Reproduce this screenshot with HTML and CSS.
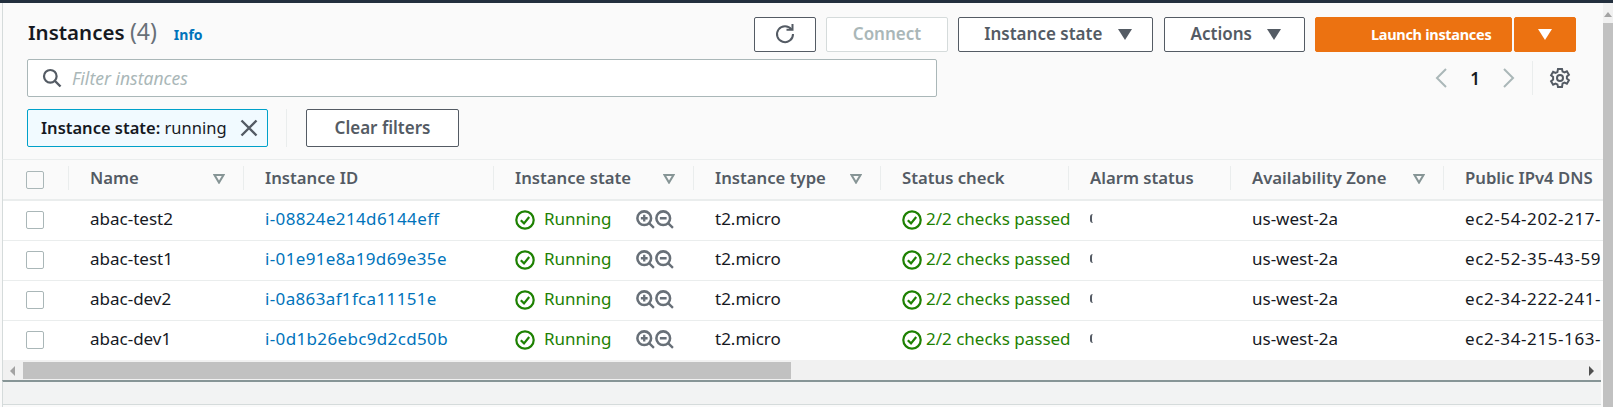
FILE: index.html

```html
<!DOCTYPE html>
<html lang="en">
<head>
  <meta charset="UTF-8">
  <title>Instances</title>
  <link rel="stylesheet" href="styles.css">
</head>
<body>
  <svg class="defs" width="0" height="0">
    <symbol id="ok" viewBox="0 0 20 20">
      <circle cx="10" cy="10" r="8.7" fill="none" stroke="currentColor" stroke-width="2.2"/>
      <path d="M5.8 10.2l3.2 3.2 5.2-6.4" fill="none" stroke="currentColor" stroke-width="2.2"/>
    </symbol>
    <symbol id="zoomin" viewBox="0 0 18 18">
      <circle cx="7.8" cy="7.8" r="6.5" fill="none" stroke="currentColor" stroke-width="2.4"/>
      <path d="M12.4 12.4l4.6 4.6M4.6 7.8h6.4M7.8 4.6V11" fill="none" stroke="currentColor" stroke-width="2.2"/>
    </symbol>
    <symbol id="zoomout" viewBox="0 0 18 18">
      <circle cx="7.8" cy="7.8" r="6.5" fill="none" stroke="currentColor" stroke-width="2.4"/>
      <path d="M12.4 12.4l4.6 4.6M4.6 7.8h6.4" fill="none" stroke="currentColor" stroke-width="2.2"/>
    </symbol>
    <symbol id="sort" viewBox="0 0 12 10">
      <path d="M1.5 1h9L6 8.6z" fill="none" stroke="currentColor" stroke-width="2"/>
    </symbol>
  </svg>

  <div class="topbar"></div>
  <div class="page">
    <div class="panel">
      <div class="toolbar">
        <div class="title-row">
          <h1>Instances <span class="count">(4)</span></h1>
          <a class="info">Info</a>
          <div class="actions">
            <button class="btn btn-icon">
              <svg width="22" height="22" viewBox="0 0 22 22"><path d="M17.5 6.5A8 8 0 1 0 19 11" fill="none" stroke="currentColor" stroke-width="2"/><path d="M12.5 6.8h6V1" fill="none" stroke="currentColor" stroke-width="2"/></svg>
            </button>
            <button class="btn btn-connect" disabled>Connect</button>
            <button class="btn btn-state">Instance state <span class="caret"></span></button>
            <button class="btn btn-actions">Actions <span class="caret"></span></button>
            <button class="btn btn-launch">Launch instances</button>
            <button class="btn btn-launch-more"><span class="caret caret-white"></span></button>
          </div>
        </div>

        <div class="search-row">
          <div class="search">
            <svg width="20" height="20" viewBox="0 0 20 20"><circle cx="8.3" cy="8.3" r="6.3" fill="none" stroke="currentColor" stroke-width="2.2"/><path d="M13 13l5.5 5.5" fill="none" stroke="currentColor" stroke-width="2.4"/></svg>
            <span>Filter instances</span>
          </div>
          <div class="pager">
            <svg width="14" height="22" viewBox="0 0 14 22"><path d="M12 2L3 11l9 9" fill="none" stroke="currentColor" stroke-width="2"/></svg>
            <span class="page-num">1</span>
            <svg width="14" height="22" viewBox="0 0 14 22"><path d="M2 2l9 9-9 9" fill="none" stroke="currentColor" stroke-width="2"/></svg>
            <span class="pager-sep"></span>
            <svg class="gear" width="22" height="22" viewBox="0 0 22 22"><path d="M9 2h4l.6 2.6 1.9.9 2.4-1.2 2 3.4-2 1.7v2.2l2 1.7-2 3.4-2.4-1.2-1.9.9L13 20H9l-.6-2.6-1.9-.9-2.4 1.2-2-3.4 2-1.7V9.9l-2-1.7 2-3.4 2.4 1.2 1.9-.9z" fill="none" stroke="currentColor" stroke-width="2"/><circle cx="11" cy="11" r="3" fill="none" stroke="currentColor" stroke-width="2"/></svg>
          </div>
        </div>

        <div class="chip-row">
          <div class="chip">
            <span><b>Instance state:</b> running</span>
            <svg width="18" height="18" viewBox="0 0 18 18"><path d="M1.5 1.5l15 15M16.5 1.5l-15 15" fill="none" stroke="currentColor" stroke-width="2.4"/></svg>
          </div>
          <span class="chip-sep"></span>
          <button class="btn btn-clear">Clear filters</button>
        </div>
      </div>

      <div class="table-wrap">
        <table>
          <colgroup>
            <col class="c-check"><col class="c-name"><col class="c-id"><col class="c-state"><col class="c-type"><col class="c-status"><col class="c-alarm"><col class="c-zone"><col class="c-dns">
          </colgroup>
          <thead>
            <tr>
              <th><span class="box box-head"></span></th>
              <th><div class="th-in">Name<svg class="sort" width="12" height="10"><use href="#sort"/></svg></div></th>
              <th><div class="th-in">Instance ID</div></th>
              <th><div class="th-in">Instance state<svg class="sort" width="12" height="10"><use href="#sort"/></svg></div></th>
              <th><div class="th-in">Instance type<svg class="sort" width="12" height="10"><use href="#sort"/></svg></div></th>
              <th><div class="th-in">Status check</div></th>
              <th><div class="th-in">Alarm status</div></th>
              <th><div class="th-in">Availability Zone<svg class="sort" width="12" height="10"><use href="#sort"/></svg></div></th>
              <th class="last"><div class="th-in">Public IPv4 DNS</div></th>
            </tr>
          </thead>
          <tbody>
            <tr>
              <td><span class="box"></span></td>
              <td>abac-test2</td>
              <td><a>i-08824e214d6144eff</a></td>
              <td><div class="state"><svg class="ok" width="20" height="20"><use href="#ok"/></svg><span class="green">Running</span><span class="zooms"><svg width="19" height="19"><use href="#zoomin"/></svg><svg width="19" height="19"><use href="#zoomout"/></svg></span></div></td>
              <td>t2.micro</td>
              <td><div class="check"><svg class="ok" width="20" height="20"><use href="#ok"/></svg><span class="green">2/2 checks passed</span></div></td>
              <td><span class="alarm"></span></td>
              <td>us-west-2a</td>
              <td class="dns">ec2-54-202-217-</td>
            </tr>
            <tr>
              <td><span class="box"></span></td>
              <td>abac-test1</td>
              <td><a>i-01e91e8a19d69e35e</a></td>
              <td><div class="state"><svg class="ok" width="20" height="20"><use href="#ok"/></svg><span class="green">Running</span><span class="zooms"><svg width="19" height="19"><use href="#zoomin"/></svg><svg width="19" height="19"><use href="#zoomout"/></svg></span></div></td>
              <td>t2.micro</td>
              <td><div class="check"><svg class="ok" width="20" height="20"><use href="#ok"/></svg><span class="green">2/2 checks passed</span></div></td>
              <td><span class="alarm"></span></td>
              <td>us-west-2a</td>
              <td class="dns">ec2-52-35-43-59</td>
            </tr>
            <tr>
              <td><span class="box"></span></td>
              <td>abac-dev2</td>
              <td><a>i-0a863af1fca11151e</a></td>
              <td><div class="state"><svg class="ok" width="20" height="20"><use href="#ok"/></svg><span class="green">Running</span><span class="zooms"><svg width="19" height="19"><use href="#zoomin"/></svg><svg width="19" height="19"><use href="#zoomout"/></svg></span></div></td>
              <td>t2.micro</td>
              <td><div class="check"><svg class="ok" width="20" height="20"><use href="#ok"/></svg><span class="green">2/2 checks passed</span></div></td>
              <td><span class="alarm"></span></td>
              <td>us-west-2a</td>
              <td class="dns">ec2-34-222-241-</td>
            </tr>
            <tr>
              <td><span class="box"></span></td>
              <td>abac-dev1</td>
              <td><a>i-0d1b26ebc9d2cd50b</a></td>
              <td><div class="state"><svg class="ok" width="20" height="20"><use href="#ok"/></svg><span class="green">Running</span><span class="zooms"><svg width="19" height="19"><use href="#zoomin"/></svg><svg width="19" height="19"><use href="#zoomout"/></svg></span></div></td>
              <td>t2.micro</td>
              <td><div class="check"><svg class="ok" width="20" height="20"><use href="#ok"/></svg><span class="green">2/2 checks passed</span></div></td>
              <td><span class="alarm"></span></td>
              <td>us-west-2a</td>
              <td class="dns">ec2-34-215-163-</td>
            </tr>
          </tbody>
        </table>
      </div>

      <div class="hscroll">
        <span class="arrow-left"></span>
        <div class="hthumb"></div>
        <span class="arrow-right"></span>
      </div>
      <div class="footer"></div>
      <div class="footer-end"></div>
    </div>

    <div class="vscroll">
      <span class="arrow-up"></span>
      <div class="vthumb"></div>
    </div>
  </div>
</body>
</html>
```

FILE: styles.css

```css
* {
  box-sizing: border-box;
}
html, body {
  height: 407px;
  overflow: hidden;
}
body {
  margin: 0;
  font-family: "Noto Sans", "Open Sans", sans-serif;
  font-size: 17px;
  color: #16191f;
  background: #fafafa;
}
.defs {
  position: absolute;
}
.topbar {
  height: 3px;
  background: #232f3e;
}
.page {
  display: flex;
  height: 404px;
}
.panel {
  width: 1603px;
  padding-left: 2px;
  background: #fafafa;
  display: flex;
  flex-direction: column;
}
.panel > * {
  border-left: 1px solid #d5dbdb;
}

/* toolbar */
.toolbar {
  height: 156px;
  padding: 14px 27px 0 24px;
}
.title-row {
  display: flex;
  align-items: center;
  height: 35px;
}
h1 {
  margin: -6px 0 0 1px;
  font-size: 20.5px;
  font-weight: 600;
  line-height: 30px;
}
.count {
  font-size: 23px;
  font-weight: 400;
  color: #687078;
}
.info {
  margin-left: 17px;
  margin-top: -1px;
  font-size: 14px;
  font-weight: 700;
  color: #0073bb;
}
.actions {
  display: flex;
  margin-left: auto;
  margin-right: 0;
}
.btn {
  height: 35px;
  padding: 0 0 2px;
  font-family: inherit;
  font-size: 17px;
  font-weight: 600;
  color: #545b64;
  background: #fff;
  border: 1px solid #545b64;
  border-radius: 2px;
}
.btn-icon {
  width: 62px;
  margin-right: 10px;
  display: flex;
  align-items: center;
  justify-content: center;
}
.btn-connect {
  width: 122px;
  margin-right: 10px;
  color: #aab7b8;
  border-color: #d5dbdb;
}
.btn-state {
  width: 195px;
  margin-right: 11px;
  padding-left: 5px;
}
.btn-actions {
  width: 141px;
  margin-right: 10px;
  padding-left: 3px;
}
.btn-launch {
  width: 197px;
  margin-right: 2px;
  padding-left: 55px;
  text-align: left;
  font-size: 14.5px;
  font-weight: 700;
  letter-spacing: -0.3px;
  color: #fff;
  background: #ec7211;
  border-color: #ec7211;
}
.btn-launch-more {
  width: 62px;
  background: #ec7211;
  border-color: #ec7211;
}
.caret {
  display: inline-block;
  width: 0;
  height: 0;
  margin-left: 11px;
  border-left: 7px solid transparent;
  border-right: 7px solid transparent;
  border-top: 11px solid #545b64;
}
.caret-white {
  margin-left: 0;
  border-top-color: #fff;
}

/* search */
.search-row {
  display: flex;
  align-items: center;
  margin-top: 7px;
}
.search {
  width: 910px;
  height: 38px;
  padding-left: 14px;
  display: flex;
  align-items: center;
  gap: 10px;
  color: #545b64;
  background: #fff;
  border: 1px solid #aab7b8;
  border-radius: 2px;
}
.search span {
  font-size: 17.5px;
  font-style: italic;
  color: #aab7b8;
}
.pager {
  display: flex;
  align-items: center;
  margin-left: auto;
  margin-right: 5px;
  color: #aab7b8;
}
.page-num {
  width: 54px;
  text-align: center;
  font-weight: 600;
  color: #16191f;
}
.pager-sep {
  width: 1px;
  height: 34px;
  margin: 0 16px;
  background: #eaeded;
}
.gear {
  color: #545b64;
}

/* chips */
.chip-row {
  display: flex;
  align-items: center;
  margin-top: 12px;
}
.chip {
  width: 241px;
  height: 38px;
  padding: 0 9px 2px 13px;
  display: flex;
  align-items: center;
  justify-content: space-between;
  font-size: 16.5px;
  color: #16191f;
  background: #f1faff;
  border: 1px solid #00a1c9;
  border-radius: 2px;
}
.chip b {
  font-weight: 600;
}
.chip svg {
  color: #545b64;
  margin-top: 2px;
}
.chip-sep {
  width: 1px;
  height: 38px;
  margin: 0 19px 0 18px;
  background: #eaeded;
}
.btn-clear {
  width: 153px;
  height: 38px;
}

/* table */
.table-wrap {
  height: 201px;
  overflow: hidden;
  border-top: 1px solid #eaeded;
}
table {
  table-layout: fixed;
  width: 1740px;
  border-collapse: collapse;
}
.c-check { width: 65px; }
.c-name { width: 175px; }
.c-id { width: 250px; }
.c-state { width: 200px; }
.c-type { width: 187px; }
.c-status { width: 188px; }
.c-alarm { width: 162px; }
.c-zone { width: 213px; }
.c-dns { width: 300px; }
th {
  height: 40px;
  padding: 0 0 4px;
  text-align: left;
  font-size: 16.7px;
  font-weight: 600;
  color: #545b64;
  background: #fafafa;
  border-bottom: 2px solid #eaeded;
}
th:first-child, td:first-child {
  padding-left: 23px;
}
th:first-child {
  padding-bottom: 0;
}
.th-in {
  height: 24px;
  padding: 0 18px 0 21px;
  display: flex;
  align-items: center;
  justify-content: space-between;
  border-left: 1px solid #eaeded;
}
.sort {
  color: #879596;
  margin-top: 2px;
}
td {
  height: 40px;
  padding: 0 0 4px 22px;
  white-space: nowrap;
  background: #fff;
  border-bottom: 1px solid #eaeded;
}
td:first-child {
  padding-bottom: 0;
}
tbody tr:last-child td {
  border-bottom: none;
}
td a {
  color: #0073bb;
  letter-spacing: 0.35px;
}
.dns {
  letter-spacing: 0.6px;
}
.box {
  display: block;
  width: 18px;
  height: 18px;
  background: #fff;
  border: 1px solid #aab7b8;
  border-radius: 2px;
}
.box-head {
  background: #fafafa;
}
.state, .check {
  display: flex;
  align-items: center;
  margin-bottom: -2px;
}
.ok {
  color: #1d8102;
  flex: none;
  margin-top: 2px;
}
.green {
  color: #1d8102;
  margin-bottom: 2px;
}
.state .green {
  margin-left: 9px;
}
.check .green {
  margin-left: 4px;
}
.zooms {
  display: flex;
  margin-left: 25px;
  margin-top: 1px;
  color: #687078;
}
.alarm {
  display: block;
  width: 3px;
  height: 9px;
  margin-top: 1px;
  border-left: 2px solid #545b64;
  border-radius: 3px 0 0 3px;
}

/* scrollbars */
.hscroll {
  display: flex;
  height: 20px;
  margin-right: 2px;
  background: #f1f1f1;
}
.hthumb {
  width: 768px;
  height: 17px;
  margin: 2px 0 0 8px;
  background: #c1c1c1;
}
.arrow-left, .arrow-right {
  width: 0;
  height: 0;
  margin-top: 6px;
  border-top: 5px solid transparent;
  border-bottom: 5px solid transparent;
}
.arrow-left {
  margin-left: 7px;
  border-right: 5px solid #a3a3a3;
}
.arrow-right {
  margin-left: auto;
  margin-right: 7px;
  border-left: 5px solid #505050;
}
.footer {
  height: 25px;
  margin-right: 2px;
  background: #f2f3f3;
  border-top: 2px solid #879596;
  border-bottom: 1px solid #d5dbdb;
}
.footer-end {
  flex: 1;
  background: #fafafa;
}
.vscroll {
  width: 10px;
  display: flex;
  flex-direction: column;
  align-items: center;
  background: #f1f1f1;
}
.arrow-up {
  width: 0;
  height: 0;
  margin: 9px 0 6px;
  border-left: 4px solid transparent;
  border-right: 4px solid transparent;
  border-bottom: 5px solid #a3a3a3;
}
.vthumb {
  flex: 1;
  width: 100%;
  background: #c1c1c1;
}
```
